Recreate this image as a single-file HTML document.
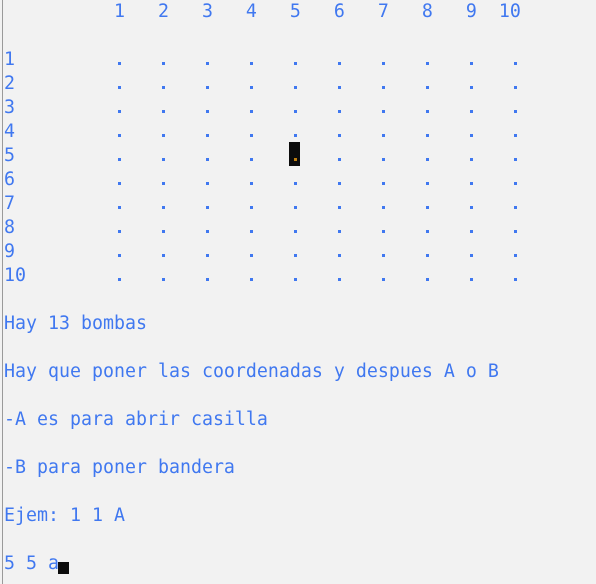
<!DOCTYPE html>
<html><head><meta charset="utf-8"><style>
html,body{margin:0;padding:0;background:#f2f2f2;width:596px;height:584px;overflow:hidden;position:relative}
.t{position:absolute;font-family:"DejaVu Sans Mono","Liberation Mono",monospace;font-size:18.27px;color:#4078f0;line-height:24px;white-space:pre}
.d{position:absolute;width:3px;height:3px;background:#4078f0}
</style></head><body>
<div style="position:absolute;left:2px;top:0;width:1px;height:584px;background:#9a9a9a"></div>
<div class="t" style="left:4px;top:0">          1   2   3   4   5   6   7   8   9  10</div>
<div class="t" style="left:4px;top:48px">1
2
3
4
5
6
7
8
9
10</div>
<div style="position:absolute;left:289px;top:142px;width:11px;height:24px;background:#0c0c0c"></div>
<div id="g"></div>
<div class="t" style="left:4px;top:312px">Hay 13 bombas

Hay que poner las coordenadas y despues A o B

-A es para abrir casilla

-B para poner bandera

Ejem: 1 1 A

5 5 a</div>
<div style="position:absolute;left:58px;top:562px;width:11px;height:12px;background:#0c0c0c"></div>
<script>
var g=document.getElementById('g'),h='';
for(var r=0;r<10;r++)for(var c=0;c<10;c++){
var x=118+44*c,y=62+24*r;
h+='<div class="d" style="left:'+x+'px;top:'+y+'px;'+(r==4&&c==4?'background:#c08010':'')+'"></div>';}
g.innerHTML=h;
</script>
</body></html>
